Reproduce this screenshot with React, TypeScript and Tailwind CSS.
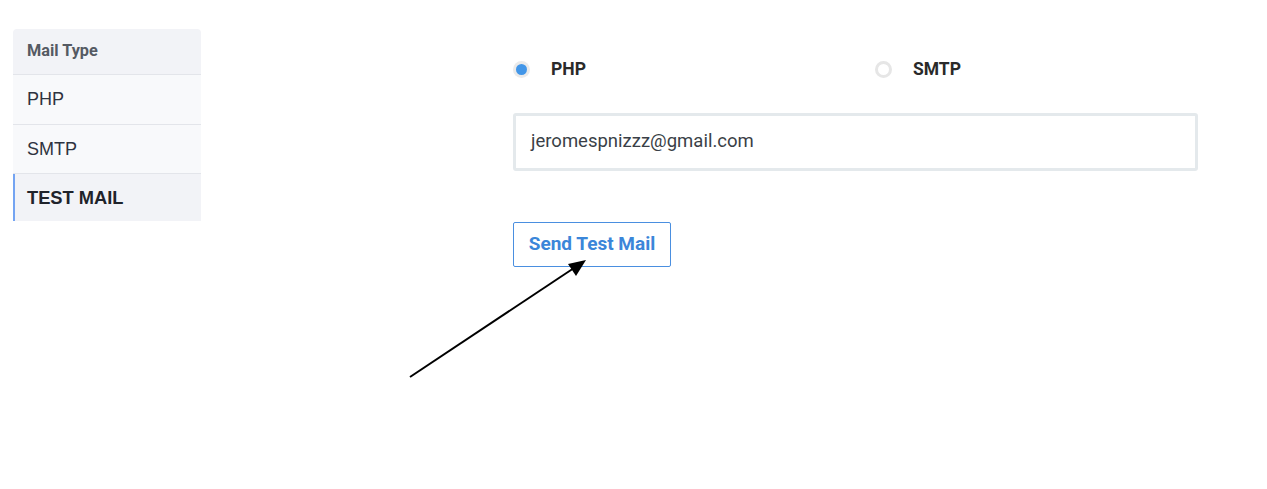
const App = () => {
  return (
    <div className="relative h-[489px] w-[1267px] bg-white font-['Roboto',sans-serif]">
      <div className="flex pt-[29px] pl-[13px]">
        <div className="w-[188px] shrink-0 rounded-sm overflow-hidden">
          <div className="h-[46px] flex items-center pl-[14px] bg-[#f2f3f7] border-b border-[#e3e5ea] text-[16.3px] font-bold text-[#555a63]">
            Mail Type
          </div>
          <div className="h-[50px] flex items-center pl-[14px] bg-[#f8f9fb] border-b border-[#e3e5ea] text-[18px] text-[#2e3340] font-['Liberation_Sans',sans-serif]">
            PHP
          </div>
          <div className="h-[49px] flex items-center pl-[14px] bg-[#f8f9fb] border-b border-[#e3e5ea] text-[18px] text-[#2e3340] font-['Liberation_Sans',sans-serif]">
            SMTP
          </div>
          <div className="h-[47px] flex items-center pl-[12px] bg-[#f2f3f7] border-l-2 border-[#74a4f2] text-[18.3px] font-bold text-[#1f232b] font-['Liberation_Sans',sans-serif]">
            TEST MAIL
          </div>
        </div>
        <div className="ml-[312px] w-[685px] pt-[31px]">
          <div className="flex items-center h-[18px]">
            <label className="w-[362px] flex items-center gap-[21px]">
              <span className="w-[17px] h-[17px] rounded-full bg-[#eaeaea] flex items-center justify-center">
                <span className="w-[11px] h-[11px] rounded-full bg-[#4296e8]" />
              </span>
              <span className="text-[17.5px] font-bold text-[#2a2a2a]">PHP</span>
            </label>
            <label className="flex items-center gap-[21px]">
              <span className="w-[17px] h-[17px] rounded-full border-[3px] border-[#e6e6e6] bg-white" />
              <span className="text-[17.5px] font-bold text-[#2a2a2a]">SMTP</span>
            </label>
          </div>
          <div className="mt-[35px] h-[58px] flex items-center rounded-[3px] border-[3px] border-[#e4e9ec] pl-[15px] text-[18.5px] text-[#3a3f47]">
            jeromespnizzz@gmail.com
          </div>
          <button className="mt-[51px] h-[45px] w-[158px] rounded-[2px] border border-[#4a8fe0] text-[19px] font-bold text-[#3b86d9]">
            Send Test Mail
          </button>
        </div>
      </div>
      <svg className="absolute left-0 top-0 pointer-events-none" width="1267" height="489">
        <line x1="410" y1="377" x2="574" y2="268" stroke="#000" strokeWidth="2" />
        <polygon points="586,260 568,264 576,276" fill="#000" />
      </svg>
    </div>
  );
};

export default App;
